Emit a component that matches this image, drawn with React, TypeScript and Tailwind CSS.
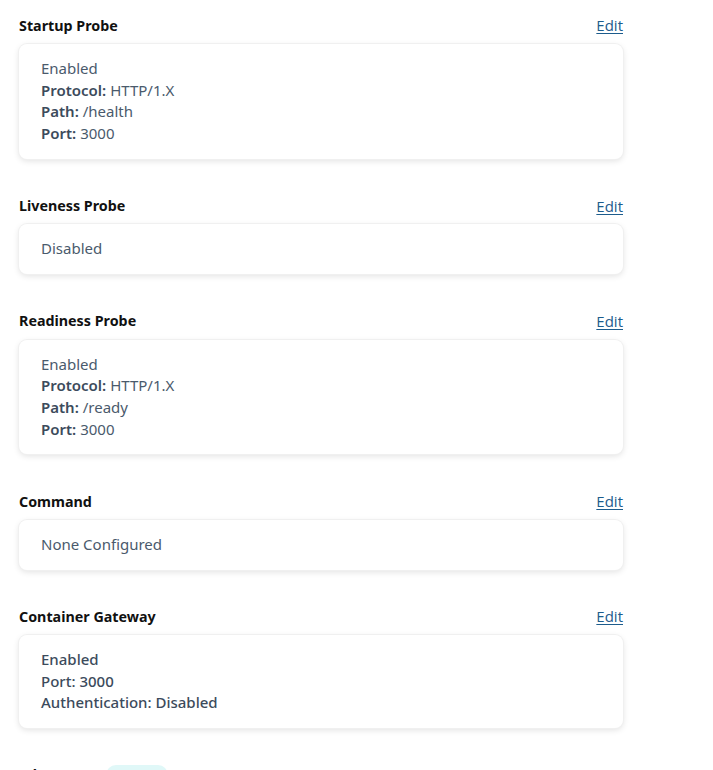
import React from 'react';

type Line = { label?: string; value: string };

const sections: { title: string; lines: Line[]; medium?: boolean }[] = [
  {
    title: 'Startup Probe',
    lines: [{ value: 'Enabled' }, { label: 'Protocol:', value: 'HTTP/1.X' }, { label: 'Path:', value: '/health' }, { label: 'Port:', value: '3000' }],
  },
  { title: 'Liveness Probe', lines: [{ value: 'Disabled' }] },
  {
    title: 'Readiness Probe',
    lines: [{ value: 'Enabled' }, { label: 'Protocol:', value: 'HTTP/1.X' }, { label: 'Path:', value: '/ready' }, { label: 'Port:', value: '3000' }],
  },
  { title: 'Command', lines: [{ value: 'None Configured' }] },
  {
    title: 'Container Gateway',
    medium: true,
    lines: [{ value: 'Enabled' }, { value: 'Port: 3000' }, { value: 'Authentication: Disabled' }],
  },
];

const Section = ({ title, lines, medium }: { title: string; lines: Line[]; medium?: boolean }) => (
  <div className="flex flex-col gap-[8px]">
    <div className="flex items-center justify-between h-[21px]">
      <h3 className="text-[14.3px] font-bold text-[#111111]">{title}</h3>
      <a
        href="#"
        className="text-[15px] text-[#1d5c8c] underline underline-offset-2"
        style={{ fontFamily: '"Open Sans", sans-serif' }}
      >
        Edit
      </a>
    </div>
    <div className="bg-white rounded-lg shadow-[0_0_0_1px_#f0f0f0,0_2px_6px_rgba(0,0,0,0.12)] px-[22px] pt-[14px] pb-[14px]">
      {lines.map((l, i) => (
        <div
          key={i}
          className={`text-[15px] leading-[21.7px] ${medium ? 'font-medium text-[#3c4b5c]' : 'text-[#4a5a6c]'}`}
        >
          {l.label && <span className="font-semibold text-[#3c4b5c]">{l.label} </span>}
          {l.value}
        </div>
      ))}
    </div>
  </div>
);

const App: React.FC = () => {
  return (
    <div className="min-h-[770px] bg-white overflow-hidden" style={{ fontFamily: '"Noto Sans", sans-serif' }}>
      <div className="w-[604px] ml-[19px] pt-[15px] flex flex-col gap-[36.5px]">
        {sections.map((s) => (
          <Section key={s.title} {...s} />
        ))}
        <div className="flex items-center gap-[14px] h-[21px]">
          <h3 className="text-[14.3px] font-bold text-[#111111]">Job Queue</h3>
          <span className="h-5 w-[62px] rounded-full bg-[#e0f8f8]" />
        </div>
      </div>
    </div>
  );
};

export default App;
